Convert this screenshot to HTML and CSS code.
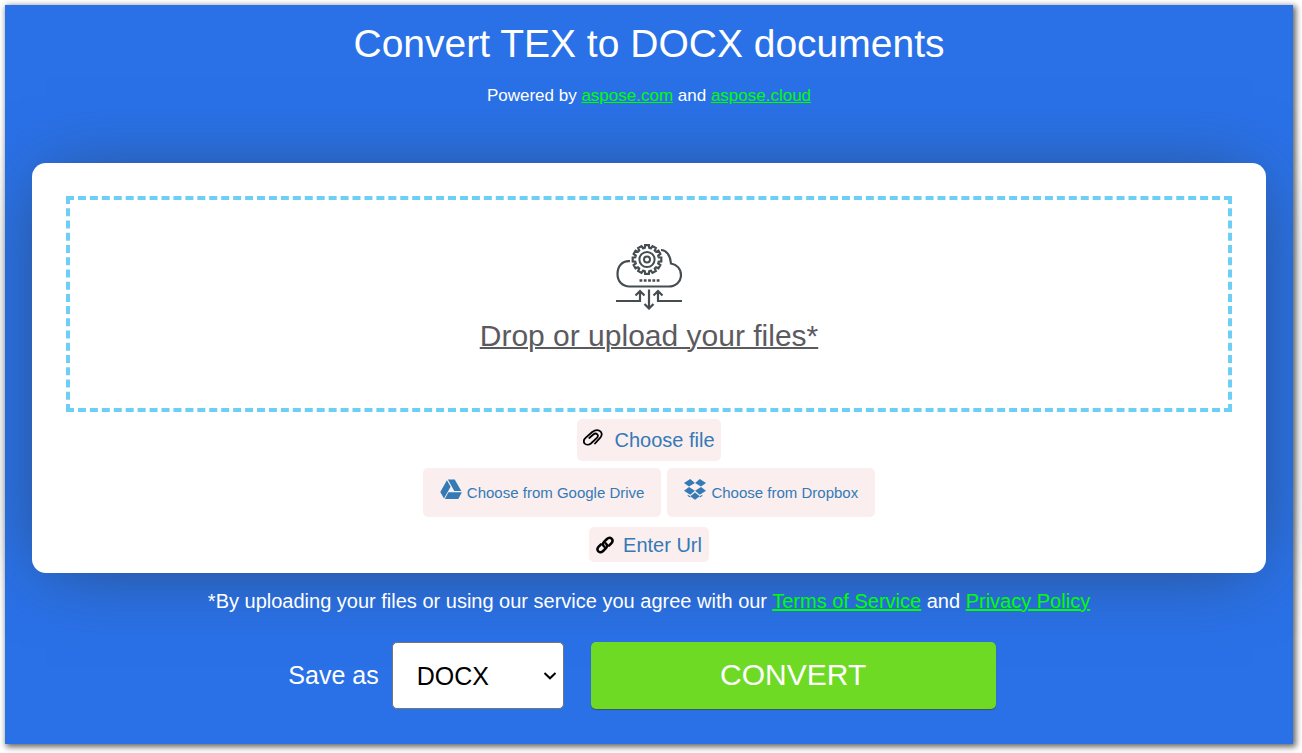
FILE: index.html
```html
<!DOCTYPE html>
<html lang="en">
<head>
<meta charset="utf-8">
<meta name="viewport" content="width=device-width, initial-scale=1">
<title>Convert TEX to DOCX documents</title>
<link rel="stylesheet" href="styles.css">
</head>
<body>
<main class="panel">
  <h1 class="title">Convert TEX to DOCX documents</h1>
  <p class="powered">Powered by <a href="#">aspose.com</a> and <a href="#">aspose.cloud</a></p>

  <section class="card">
    <button class="dropzone" type="button">
      <svg class="cloud" viewBox="0 0 66 66" fill="none" stroke="#454d50" stroke-width="2.2" aria-hidden="true">
        <defs>
          <path id="tooth" d="M-3.100-11.300-2.200-11.700-1.900-14.300H1.900L2.200-11.700 3.100-11.300"/>
        </defs>
        <path d="M14 17.200C6 16.500 1.500 22.500 1.500 30c0 7.500 5 12.500 12 12.500h39C60 42.500 65 37.500 65 31c0-6-4-10.500-10-11.500C54.500 11 50 6 45 6"/>
        <g transform="translate(31 15.500)">
          <use href="#tooth"/>
          <use href="#tooth" transform="rotate(30)"/>
          <use href="#tooth" transform="rotate(60)"/>
          <use href="#tooth" transform="rotate(90)"/>
          <use href="#tooth" transform="rotate(120)"/>
          <use href="#tooth" transform="rotate(150)"/>
          <use href="#tooth" transform="rotate(180)"/>
          <use href="#tooth" transform="rotate(210)"/>
          <use href="#tooth" transform="rotate(240)"/>
          <use href="#tooth" transform="rotate(270)"/>
          <use href="#tooth" transform="rotate(300)"/>
          <use href="#tooth" transform="rotate(330)"/>
          <circle r="7.600" stroke-width="2"/>
          <circle r="3" stroke-width="2"/>
        </g>
        <path d="M23.500 36.500h20" stroke-width="2.600" stroke-dasharray="2.800 1.500"/>
        <path d="M0 57h24V47M19.500 51.500 24 47l4.500 4.500M66 57H42V47M37.500 51.500 42 47l4.500 4.500M33 45.500V64M28.500 60l4.500 4.500 4.500-4.500"/>
      </svg>
      <span class="dropzone-label">Drop or upload your files*</span>
    </button>

    <div class="sources">
      <button class="source source-file" type="button">
        <svg class="icon-clip" viewBox="0 0 20 18" fill="none" stroke="#000" stroke-width="1.800" stroke-linecap="round" aria-hidden="true">
          <path d="M12 14.500 17.300 8.700C19.500 6 19 3 16.500 1.700c-2.300-1.100-4.800-.6-7.300 1.300L2.800 8.700C.6 10.700.4 13 1.600 14.500c1.400 1.500 4.200 1.600 6.300 0l6-5.600c1.300-1.300 1.300-2.700.4-3.600-1-1-2.700-.9-4 .2L6.300 9"/>
        </svg>
        <span>Choose file</span>
      </button>
      <div class="source-row">
        <button class="source source-cloud" type="button">
          <svg class="icon-cloud" viewBox="0 0 22 20" fill="#337ab7" aria-hidden="true">
            <path d="M6.900.8 10.600 7.200 4 19 .3 12.500zM7.900 0h6.800L21.300 11.600h-7zM8.400 12.800h13.500L18.300 19.500H4.900z"/>
          </svg>
          <span>Choose from Google Drive</span>
        </button>
        <button class="source source-cloud" type="button">
          <svg class="icon-cloud" viewBox="0 0 22 21" fill="#337ab7" aria-hidden="true">
            <path d="M6.200 0 10.900 3.900 5 7.600 0 4zM15.800 0 22 4l-5 3.600-5.900-3.700zM5 8.100l5.900 3.700L6.200 15.700 0 11.800zM17 8.100l5 3.700-6.200 3.900-4.700-3.900zM11 13.400l4.800 3.800-4.800 3.500-4.800-3.500zM3.700 15.700l2.500 1.500v1.300l-2.500-1.600zM18.300 15.700v1.200l-2.500 1.600v-1.300z"/>
          </svg>
          <span>Choose from Dropbox</span>
        </button>
      </div>
      <button class="source source-url" type="button">
        <svg class="icon-link" viewBox="0 0 18 18" fill="none" stroke="#000" stroke-width="2.500" stroke-linecap="round" aria-hidden="true">
          <path d="M8.200 10.600C6.600 9.300 6.600 7.300 8 5.900L10.900 3c1.600-1.500 3.500-1.500 4.700-.4 1.200 1.300 1.200 3.200-.3 4.700L13 9.600"/>
          <path d="M9.800 7.400c1.600 1.300 1.600 3.300.2 4.700L7.100 15c-1.600 1.500-3.500 1.500-4.700.4-1.200-1.300-1.200-3.200.3-4.700L5 8.400"/>
        </svg>
        <span>Enter Url</span>
      </button>
    </div>
  </section>

  <p class="terms">*By uploading your files or using our service you agree with our <a href="#">Terms of Service</a> and <a href="#">Privacy Policy</a></p>

  <form class="actions">
    <label class="save-label" for="format">Save as</label>
    <div class="format-box">
      <select class="format" id="format"><option>DOCX</option></select>
      <svg class="chevron" viewBox="0 0 14 8" fill="none" stroke="#000" stroke-width="2" aria-hidden="true"><path d="M1.500 1 7 6.300 12.500 1"/></svg>
    </div>
    <button class="convert" type="button">CONVERT</button>
  </form>
</main>
</body>
</html>
```
FILE: styles.css
```css
* {
  box-sizing: border-box;
}

body {
  margin: 0;
  padding: 5px 9px 9px 5px;
  background: #fff;
  font-family: "Liberation Sans", Arial, sans-serif;
  color: #fff;
}

button,
select {
  font-family: inherit;
}

button {
  cursor: pointer;
}

.panel {
  padding: 16px 27px 35px;
  background: #2a71e7;
  box-shadow: 2px 2px 6px 1px rgba(0, 0, 0, 0.6);
  text-align: center;
}

.title {
  margin: 0;
  font-size: 39px;
  font-weight: 400;
  line-height: 46px;
}

.powered {
  margin: 19px 0 0;
  font-size: 17px;
  line-height: 20px;
}

a {
  color: #0f0;
  text-decoration: underline;
}

.card {
  margin-top: 57px;
  padding: 33px 34px 11px;
  border-radius: 14px;
  background: #fff;
  box-shadow: 0 4px 70px -14px rgba(44, 62, 80, 0.8);
}

.dropzone {
  display: flex;
  flex-direction: column;
  align-items: center;
  width: 100%;
  padding: 44px 0 54px;
  border: 4px dashed #6dcff6;
  background: #fff;
  color: #5b5b5f;
}

.cloud {
  width: 66px;
  height: 66px;
}

.dropzone-label {
  margin-top: 8px;
  font-size: 30px;
  line-height: 36px;
  text-decoration: underline;
  text-decoration-thickness: 2px;
}

.sources {
  display: flex;
  flex-direction: column;
  align-items: center;
  margin-top: 7px;
}

.source {
  display: flex;
  align-items: center;
  border: 0;
  border-radius: 5px;
  background: #faeeee;
  color: #337ab7;
}

.source-file {
  align-items: flex-start;
  gap: 11px;
  padding: 9px 6px;
  font-size: 20px;
  line-height: 24px;
}

.source-row {
  display: flex;
  flex-wrap: wrap;
  justify-content: center;
  gap: 6px;
  margin: 7px 0 10px;
}

.source-cloud {
  align-items: flex-start;
  gap: 5px;
  padding: 11px 17px 10px;
  font-size: 15px;
  line-height: 28px;
}

.source-url {
  gap: 9px;
  padding: 6px 7px 5px;
  font-size: 20px;
  line-height: 24px;
}

.icon-clip {
  width: 20px;
  height: 20px;
}

.icon-cloud {
  width: 22px;
  height: 21px;
}

.icon-link {
  width: 18px;
  height: 18px;
}

.terms {
  margin: 16px 0 0;
  font-size: 20px;
  line-height: 24px;
}

.actions {
  display: flex;
  align-items: center;
  justify-content: center;
  margin-top: 29px;
  padding-right: 14px;
}

.save-label {
  margin-right: 13px;
  font-size: 25px;
}

.format-box {
  display: grid;
  align-items: center;
}

.format {
  grid-area: 1 / 1;
  width: 172px;
  height: 67px;
  padding: 0 24px;
  appearance: none;
  border: 1px solid #767676;
  border-radius: 5px;
  background: #fff;
  color: #000;
  font-size: 25px;
}

.chevron {
  grid-area: 1 / 1;
  justify-self: end;
  width: 14px;
  height: 8px;
  margin-right: 7px;
  pointer-events: none;
}

.convert {
  width: 405px;
  height: 67px;
  margin-left: 27px;
  padding: 0 0 2px;
  border: 0;
  border-radius: 5px;
  background: #6eda24;
  box-shadow: 0 1px 1px rgba(60, 80, 60, 0.8);
  color: #fff;
  font-size: 30px;
}
```
